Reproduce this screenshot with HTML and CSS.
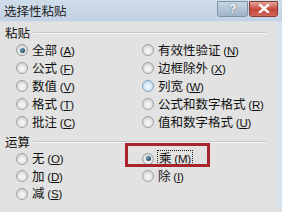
FILE: index.html
```html
<!DOCTYPE html>
<html lang="zh-CN">
<head>
<meta charset="utf-8">
<title>选择性粘贴</title>
<link rel="stylesheet" href="styles.css">
</head>
<body>
<div class="window">
  <div class="titlebar">
    <span class="title">选择性粘贴</span>
    <div class="tbtns">
      <span class="tbtn help">?</span>
      <span class="tbtn close">
        <svg width="12" height="9" viewBox="0 0 12 9"><path d="M2 1 L10 8 M10 1 L2 8" stroke="#fff" stroke-width="2.4" stroke-linecap="square"/></svg>
      </span>
    </div>
  </div>
  <div class="content">
    <div class="ghead"><span class="glabel">粘贴</span><span class="gline"></span></div>
    <div class="options paste">
      <div class="opt"><span class="radio on"></span><span class="lbl">全部 <span class="k">(<u>A</u>)</span></span></div>
      <div class="opt"><span class="radio"></span><span class="lbl">有效性验证 <span class="k">(<u>N</u>)</span></span></div>
      <div class="opt"><span class="radio"></span><span class="lbl">公式 <span class="k">(<u>F</u>)</span></span></div>
      <div class="opt"><span class="radio"></span><span class="lbl">边框除外 <span class="k">(<u>X</u>)</span></span></div>
      <div class="opt"><span class="radio"></span><span class="lbl">数值 <span class="k">(<u>V</u>)</span></span></div>
      <div class="opt"><span class="radio hover"></span><span class="lbl">列宽 <span class="k">(<u>W</u>)</span></span></div>
      <div class="opt"><span class="radio"></span><span class="lbl">格式 <span class="k">(<u>T</u>)</span></span></div>
      <div class="opt"><span class="radio"></span><span class="lbl">公式和数字格式 <span class="k">(<u>R</u>)</span></span></div>
      <div class="opt"><span class="radio"></span><span class="lbl">批注 <span class="k">(<u>C</u>)</span></span></div>
      <div class="opt"><span class="radio"></span><span class="lbl">值和数字格式 <span class="k">(<u>U</u>)</span></span></div>
    </div>
    <div class="ghead second"><span class="glabel">运算</span><span class="gline"></span></div>
    <div class="options ops">
      <div class="opt"><span class="radio"></span><span class="lbl">无 <span class="k">(<u>O</u>)</span></span></div>
      <div class="opt"><span class="radio on"></span><span class="lbl focus">乘 <span class="k">(<u>M</u>)</span></span></div>
      <div class="opt"><span class="radio"></span><span class="lbl">加 <span class="k">(<u>D</u>)</span></span></div>
      <div class="opt"><span class="radio"></span><span class="lbl">除 <span class="k">(<u>I</u>)</span></span></div>
      <div class="opt"><span class="radio"></span><span class="lbl">减 <span class="k">(<u>S</u>)</span></span></div>
    </div>
  </div>
  <div class="mark"></div>
</div>
</body>
</html>
```

FILE: styles.css
```css
html, body {
  margin: 0;
  padding: 0;
}
body {
  width: 282px;
  height: 212px;
  overflow: hidden;
  background: #e2e2e2;
  font-family: "Noto Sans CJK SC", "Liberation Sans", sans-serif;
  font-size: 12.5px;
  color: #111;
}
.window {
  position: relative;
  width: 282px;
  height: 212px;
  box-sizing: border-box;
  border-right: 4px solid #d9e1ea;
}
.titlebar {
  height: 21px;
  margin-right: -4px;
  background: linear-gradient(#cfdcea, #c2d2e4);
  display: flex;
  align-items: center;
  justify-content: space-between;
  border-bottom: 1px solid #d4dde6;
}
.title {
  padding-left: 4px;
  font-size: 12.5px;
  color: #222;
  line-height: 21px;
}
.tbtns {
  display: flex;
  gap: 1px;
  margin-right: 4px;
  margin-top: -4px;
}
.tbtn {
  height: 16px;
  display: flex;
  align-items: center;
  justify-content: center;
  border-radius: 0 0 3px 3px;
  box-sizing: border-box;
}
.help {
  width: 31px;
  background: linear-gradient(#c9d6e3, #9fb3c8);
  border: 1px solid #7f93a8;
  color: #fff;
  font-family: "Liberation Sans", sans-serif;
  font-weight: bold;
  font-size: 13px;
  text-shadow: 0 0 1px #4a5f77, 0 0 1px #4a5f77;
}
.close {
  width: 29px;
  background: linear-gradient(#e3a49c, #c7453b 55%, #d0675d);
  border: 1px solid #8a3a33;
}
.content {
  padding-left: 5px;
  padding-top: 3px;
}
.ghead {
  display: flex;
  align-items: center;
  height: 16px;
  gap: 3px;
  margin-right: 12px;
}
.ghead.second {
  margin-top: 3px;
}
.glabel {
  font-size: 12.5px;
  line-height: 16px;
}
.gline {
  flex: 1;
  border-top: 1px solid #c6c6c6;
  border-bottom: 1px solid #f4f4f4;
}
.options {
  display: grid;
  grid-template-columns: 126px 1fr;
  padding-left: 11px;
}
.opt {
  display: flex;
  align-items: center;
  gap: 4px;
  height: 18px;
}
.ops .opt {
  height: 17.5px;
}
.lbl {
  line-height: 14px;
  white-space: nowrap;
}
.k {
  font-family: "Liberation Sans", sans-serif;
  font-size: 11.5px;
  letter-spacing: -0.2px;
}
.focus {
  outline: 1px dotted #222;
  outline-offset: 0;
  padding: 0 1px;
}
.radio {
  width: 12px;
  height: 12px;
  box-sizing: border-box;
  border-radius: 50%;
  border: 1px solid #a0a0a0;
  background: radial-gradient(circle at 50% 60%, #f2f2f2 25%, #c4c4c4 100%);
  position: relative;
  flex: none;
}
.radio.hover {
  border-color: #7fa3c4;
  background: radial-gradient(circle at 50% 60%, #eaf4fb 25%, #a9c8e0 100%);
}
.radio.on::after {
  content: "";
  position: absolute;
  left: 2.5px;
  top: 2.5px;
  width: 5px;
  height: 5px;
  border-radius: 50%;
  background: radial-gradient(circle at 40% 35%, #6fa6c6, #1d4460 70%);
}
.mark {
  position: absolute;
  left: 125px;
  top: 143px;
  width: 85px;
  height: 24px;
  box-sizing: border-box;
  border: 3px solid #a8242c;
}
```
